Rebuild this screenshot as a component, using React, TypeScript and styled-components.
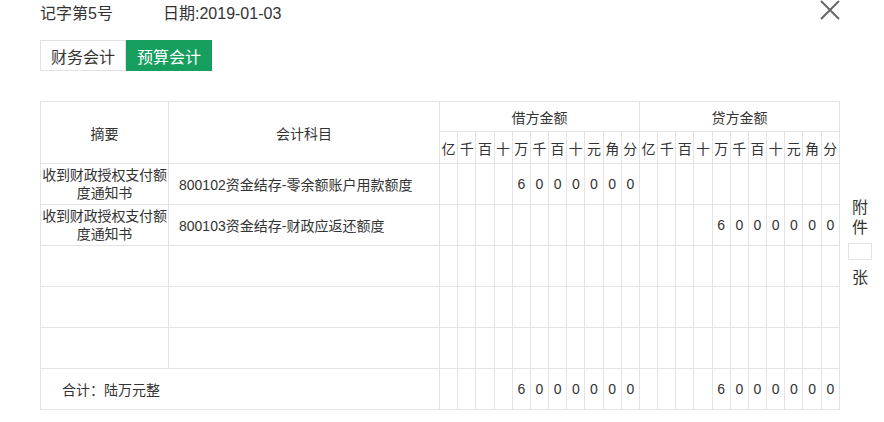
import React from 'react';
import styled, { createGlobalStyle } from 'styled-components';

const GlobalStyle = createGlobalStyle`
  html, body {
    margin: 0;
    padding: 0;
    background: #fff;
  }
  body {
    font-family: "Microsoft YaHei", "Liberation Sans", "Noto Sans CJK SC", sans-serif;
    color: #333;
  }
`;

const UNITS = ['亿', '千', '百', '十', '万', '千', '百', '十', '元', '角', '分'];

// amount as 11 digit slots, blank before the first significant digit
const toDigits = (cents: number | null): string[] => {
  if (cents === null) return Array(11).fill('');
  const s = String(cents);
  return Array(11 - s.length).fill('').concat(s.split(''));
};

interface Entry {
  summary: string;
  subject: string;
  debit: number | null;
  credit: number | null;
}

const entries: Entry[] = [
  { summary: '收到财政授权支付额度通知书', subject: '800102资金结存-零余额账户用款额度', debit: 6000000, credit: null },
  { summary: '收到财政授权支付额度通知书', subject: '800103资金结存-财政应返还额度', debit: null, credit: 6000000 },
  { summary: '', subject: '', debit: null, credit: null },
  { summary: '', subject: '', debit: null, credit: null },
  { summary: '', subject: '', debit: null, credit: null },
];

const Page = styled.div`
  display: flex;
  align-items: flex-start;
  padding-left: 40px;
`;

const Main = styled.div`
  width: 800px;
`;

const Header = styled.div`
  display: flex;
  align-items: center;
  height: 24px;
  font-size: 16px;
`;

const Voucher = styled.span`
  width: 123px;
`;

const DateText = styled.span`
  flex: 1;
`;

const CloseButton = styled.button`
  width: 20px;
  height: 20px;
  margin-top: -5px;
  padding: 0;
  border: none;
  background: none;
  cursor: pointer;
  display: flex;
`;

const Tabs = styled.div`
  display: flex;
  margin-top: 16px;
`;

const Tab = styled.div<{ $active?: boolean }>`
  height: 31px;
  box-sizing: border-box;
  padding: 0 10px;
  display: flex;
  align-items: center;
  font-size: 16px;
  border: 1px solid ${(p) => (p.$active ? '#169e5e' : '#e2e2e2')};
  background: ${(p) => (p.$active ? '#169e5e' : '#fff')};
  color: ${(p) => (p.$active ? '#fff' : '#333')};
`;

const Table = styled.table`
  margin-top: 30px;
  width: 800px;
  table-layout: fixed;
  border-collapse: collapse;
  font-size: 14px;
  color: #333;
  border: 1px solid #e4e4e4;
`;

const Cell = styled.td<{ $line?: 'blue' | 'red' }>`
  border: 1px solid #e4e4e4;
  ${(p) => p.$line === 'blue' && 'border-left-color: #a6d8f7;'}
  ${(p) => p.$line === 'red' && 'border-left-color: #f0b8bc;'}
  padding: 0;
  text-align: center;
  vertical-align: middle;
  overflow: hidden;
`;

const HeadCell = styled(Cell)`
  height: 29px;
`;

const UnitCell = styled(Cell)`
  height: 31px;
  white-space: nowrap;
`;

const SummaryCell = styled(Cell)`
  height: 40px;
  line-height: 18px;
  letter-spacing: -0.15px;
  word-break: break-all;
`;

const SubjectCell = styled(Cell)`
  text-align: left;
  padding-left: 10px;
  white-space: nowrap;
`;

const TotalCell = styled(Cell)`
  height: 40px;
  text-align: left;
  padding-left: 21px;
`;

const Attach = styled.div`
  margin-top: 198px;
  margin-left: 8px;
  width: 24px;
  display: flex;
  flex-direction: column;
  align-items: center;
  font-size: 16px;
  line-height: 20px;
`;

const AttachInput = styled.input`
  width: 24px;
  height: 17px;
  box-sizing: border-box;
  margin: 5px 0 8px;
  padding: 0;
  border: 1px solid #e4e4e4;
  outline: none;
`;

const lineFor = (i: number): 'blue' | 'red' | undefined =>
  i === 3 || i === 6 ? 'blue' : i === 9 ? 'red' : undefined;

const DigitCells = ({ cents }: { cents: number | null }) => (
  <>
    {toDigits(cents).map((d, i) => (
      <Cell key={i} $line={lineFor(i)}>
        {d}
      </Cell>
    ))}
  </>
);

export default function App() {
  return (
    <>
      <GlobalStyle />
      <Page>
        <Main>
          <Header>
            <Voucher>记字第5号</Voucher>
            <DateText>日期:2019-01-03</DateText>
            <CloseButton aria-label="关闭">
              <svg width="20" height="20" viewBox="0 0 20 20">
                <path d="M1 1L19 19M19 1L1 19" stroke="#666" strokeWidth="2" />
              </svg>
            </CloseButton>
          </Header>
          <Tabs>
            <Tab>财务会计</Tab>
            <Tab $active>预算会计</Tab>
          </Tabs>
          <Table>
            <colgroup>
              <col style={{ width: 128 }} />
              <col style={{ width: 271 }} />
              {Array.from({ length: 22 }).map((_, i) => (
                <col key={i} />
              ))}
            </colgroup>
            <tbody>
              <tr>
                <HeadCell rowSpan={2}>摘要</HeadCell>
                <HeadCell rowSpan={2}>会计科目</HeadCell>
                <HeadCell colSpan={11}>借方金额</HeadCell>
                <HeadCell colSpan={11}>贷方金额</HeadCell>
              </tr>
              <tr>
                {[...UNITS, ...UNITS].map((u, i) => (
                  <UnitCell key={i} $line={lineFor(i % 11)}>
                    {u}
                  </UnitCell>
                ))}
              </tr>
              {entries.map((e, i) => (
                <tr key={i}>
                  <SummaryCell>{e.summary}</SummaryCell>
                  <SubjectCell>{e.subject}</SubjectCell>
                  <DigitCells cents={e.debit} />
                  <DigitCells cents={e.credit} />
                </tr>
              ))}
              <tr>
                <TotalCell colSpan={2}>合计：陆万元整</TotalCell>
                <DigitCells cents={6000000} />
                <DigitCells cents={6000000} />
              </tr>
            </tbody>
          </Table>
        </Main>
        <Attach>
          <span>附</span>
          <span>件</span>
          <AttachInput />
          <span>张</span>
        </Attach>
      </Page>
    </>
  );
}
